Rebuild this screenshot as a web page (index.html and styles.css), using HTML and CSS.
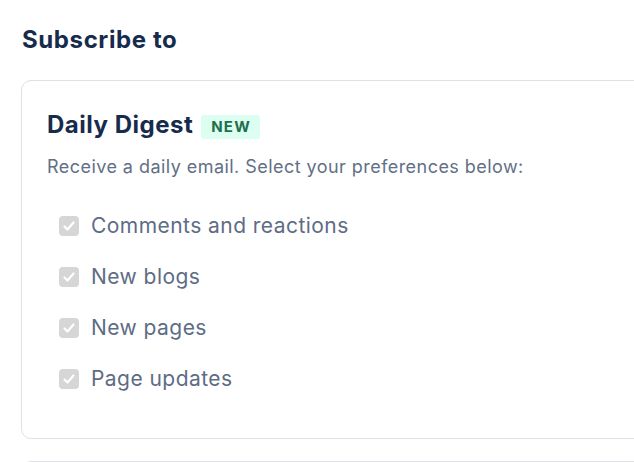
FILE: index.html
```html
<!DOCTYPE html>
<html lang="en">
<head>
<meta charset="utf-8">
<title>Subscribe to</title>
<link rel="stylesheet" href="styles.css">
</head>
<body>
<main class="page">
  <h1 class="title">Subscribe to</h1>
  <section class="card">
    <div class="card-head">
      <h2 class="card-title">Daily Digest</h2>
      <span class="badge">NEW</span>
    </div>
    <p class="desc">Receive a daily email. Select your preferences below:</p>
    <ul class="options">
      <li class="option"><span class="box"><svg viewBox="0 0 20 20" width="20" height="20"><path d="M5.5 10.5l3 3 6-7" fill="none" stroke="#fff" stroke-width="2.2" stroke-linecap="round" stroke-linejoin="round"/></svg></span><span class="label">Comments and reactions</span></li>
      <li class="option"><span class="box"><svg viewBox="0 0 20 20" width="20" height="20"><path d="M5.5 10.5l3 3 6-7" fill="none" stroke="#fff" stroke-width="2.2" stroke-linecap="round" stroke-linejoin="round"/></svg></span><span class="label">New blogs</span></li>
      <li class="option"><span class="box"><svg viewBox="0 0 20 20" width="20" height="20"><path d="M5.5 10.5l3 3 6-7" fill="none" stroke="#fff" stroke-width="2.2" stroke-linecap="round" stroke-linejoin="round"/></svg></span><span class="label">New pages</span></li>
      <li class="option"><span class="box"><svg viewBox="0 0 20 20" width="20" height="20"><path d="M5.5 10.5l3 3 6-7" fill="none" stroke="#fff" stroke-width="2.2" stroke-linecap="round" stroke-linejoin="round"/></svg></span><span class="label">Page updates</span></li>
    </ul>
  </section>
  <section class="card card-next"></section>
</main>
</body>
</html>
```

FILE: styles.css
```css
html, body {
  margin: 0;
  padding: 0;
  overflow: hidden;
  background: #ffffff;
}
body {
  font-family: Inter, "Noto Sans", "Liberation Sans", sans-serif;
  color: #172b4d;
}
.page {
  padding: 26px 0 0 21px;
}
.title {
  margin: 0 0 0 1px;
  font-size: 24px;
  line-height: 28px;
  font-weight: 700;
  letter-spacing: 0.6px;
  color: #172b4d;
}
.card {
  margin-top: 26px;
  width: 680px;
  border: 1px solid #dfe1e6;
  border-radius: 10px;
  padding: 28px 25px 44px 25px;
  box-sizing: border-box;
}
.card-head {
  display: flex;
  align-items: center;
  gap: 8px;
}
.card-title {
  margin: 0;
  font-size: 24px;
  line-height: 32px;
  font-weight: 700;
  letter-spacing: 0.5px;
  color: #172b4d;
}
.badge {
  background: #dcfff1;
  color: #216e4e;
  font-size: 15px;
  font-weight: 700;
  letter-spacing: 1.2px;
  line-height: 24px;
  padding: 0 9px 0 10px;
  border-radius: 3px;
  margin-top: 3px;
}
.desc {
  margin: 14px 0 0 0;
  font-size: 18px;
  line-height: 24px;
  letter-spacing: 0.45px;
  color: #626f86;
}
.options {
  list-style: none;
  margin: 32px 0 0 0;
  padding: 0 0 0 12px;
  display: flex;
  flex-direction: column;
  gap: 21px;
}
.option {
  display: flex;
  align-items: center;
  gap: 12px;
  height: 30px;
}
.box {
  width: 20px;
  height: 20px;
  border-radius: 4px;
  background: #d6d6d6;
  display: flex;
}
.label {
  font-size: 21px;
  line-height: 30px;
  letter-spacing: 0.45px;
  color: #5e6c84;
}
.card-next {
  margin-top: 22px;
  height: 200px;
}
```
